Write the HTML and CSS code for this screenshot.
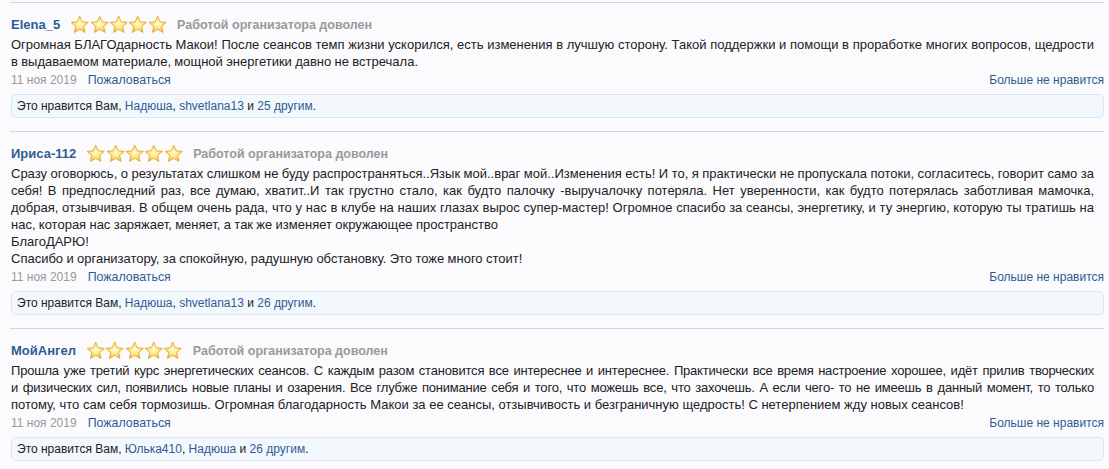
FILE: index.html
```html
<!DOCTYPE html>
<html lang="ru">
<head>
    <meta charset="UTF-8">
    <title>Отзывы</title>
    <link rel="stylesheet" href="styles.css">
</head>
<body>
<svg width="0" height="0" class="defs">
    <defs>
        <radialGradient id="gold" cx="50%" cy="45%" r="60%">
            <stop offset="0%" stop-color="#fffbe0"/>
            <stop offset="45%" stop-color="#ffe98a"/>
            <stop offset="100%" stop-color="#f2b531"/>
        </radialGradient>
        <symbol id="star" viewBox="0 0 20 20">
            <path d="M10 1.2l2.6 5.8 6.3.6-4.8 4.2 1.4 6.2L10 14.8 4.5 18l1.4-6.2L1.1 7.6l6.3-.6z" fill="url(#gold)" stroke="#e3a52a" stroke-width=".9" stroke-linejoin="round"/>
        </symbol>
    </defs>
</svg>

<div class="reviews">
    <div class="review">
        <div class="head">
            <a class="name" href="#">Elena_5</a>
            <span class="stars">
                <svg><use href="#star"/></svg><svg><use href="#star"/></svg><svg><use href="#star"/></svg><svg><use href="#star"/></svg><svg><use href="#star"/></svg>
            </span>
            <span class="verdict">Работой организатора доволен</span>
        </div>
        <div class="text">Огромная БЛАГОдарность Макои! После сеансов темп жизни ускорился, есть изменения в лучшую сторону. Такой поддержки и помощи в проработке многих вопросов, щедрости в выдаваемом материале, мощной энергетики давно не встречала.</div>
        <div class="meta">
            <span class="date">11 ноя 2019</span>
            <a href="#" class="report">Пожаловаться</a>
            <a href="#" class="unlike">Больше не нравится</a>
        </div>
        <div class="likes">Это нравится Вам, <a href="#">Надюша</a>, <a href="#">shvetlana13</a> и <a href="#">25 другим</a>.</div>
    </div>

    <div class="review">
        <div class="head">
            <a class="name" href="#">Ириса-112</a>
            <span class="stars">
                <svg><use href="#star"/></svg><svg><use href="#star"/></svg><svg><use href="#star"/></svg><svg><use href="#star"/></svg><svg><use href="#star"/></svg>
            </span>
            <span class="verdict">Работой организатора доволен</span>
        </div>
        <div class="text">Сразу оговорюсь, о результатах слишком не буду распространяться..Язык мой..враг мой..Изменения есть! И то, я практически не пропускала потоки, согласитесь, говорит само за себя! В предпоследний раз, все думаю, хватит..И так грустно стало, как будто палочку -выручалочку потеряла. Нет уверенности, как будто потерялась заботливая мамочка, добрая, отзывчивая. В общем очень рада, что у нас в клубе на наших глазах вырос супер-мастер! Огромное спасибо за сеансы, энергетику, и ту энергию, которую ты тратишь на нас, которая нас заряжает, меняет, а так же изменяет окружающее пространство<br>БлагоДАРЮ!<br>Спасибо и организатору, за спокойную, радушную обстановку. Это тоже много стоит!</div>
        <div class="meta">
            <span class="date">11 ноя 2019</span>
            <a href="#" class="report">Пожаловаться</a>
            <a href="#" class="unlike">Больше не нравится</a>
        </div>
        <div class="likes">Это нравится Вам, <a href="#">Надюша</a>, <a href="#">shvetlana13</a> и <a href="#">26 другим</a>.</div>
    </div>

    <div class="review">
        <div class="head">
            <a class="name" href="#">МойАнгел</a>
            <span class="stars">
                <svg><use href="#star"/></svg><svg><use href="#star"/></svg><svg><use href="#star"/></svg><svg><use href="#star"/></svg><svg><use href="#star"/></svg>
            </span>
            <span class="verdict">Работой организатора доволен</span>
        </div>
        <div class="text plain">
            <div class="full">Прошла уже третий курс энергетических сеансов. С каждым разом становится все интереснее и интереснее. Практически все время настроение хорошее, идёт прилив творческих<br>и физических сил, появились новые планы и озарения. Все глубже понимание себя и того, что можешь все, что захочешь. А если чего- то не имеешь в данный момент, то только</div>
            потому, что сам себя тормозишь. Огромная благодарность Макои за ее сеансы, отзывчивость и безграничную щедрость! С нетерпением жду новых сеансов!
        </div>
        <div class="meta">
            <span class="date">11 ноя 2019</span>
            <a href="#" class="report">Пожаловаться</a>
            <a href="#" class="unlike">Больше не нравится</a>
        </div>
        <div class="likes">Это нравится Вам, <a href="#">Юлька410</a>, <a href="#">Надюша</a> и <a href="#">26 другим</a>.</div>
    </div>
</div>
</body>
</html>
```

FILE: styles.css
```css
*{margin:0;padding:0;box-sizing:border-box;}
body{
    background:#fbfbfe;
    font-family:"Liberation Sans",Arial,sans-serif;
    font-size:13px;
    color:#222;
    overflow:hidden;
}
a{color:#2f5b93;text-decoration:none;}
.defs{position:absolute;}

.reviews{padding:2px 5px 0 10px;}
.review{
    border-top:1px solid #cfd8e3;
    padding:10px 0 13px 1px;
}
.head{
    display:flex;
    align-items:center;
    height:23px;
}
.name{font-weight:bold;font-size:13px;color:#2d5c95;}
.stars{display:flex;margin:0 10px 0 10px;}
.stars svg{width:19.4px;height:19.4px;}
.verdict{color:#999;font-weight:bold;font-size:12.5px;}

.text{line-height:17px;text-align:justify;padding-right:10px;word-spacing:-0.3px;}
.text.plain{word-spacing:0;}
.text .full{text-align-last:justify;letter-spacing:-0.2px;}

.meta{display:flex;line-height:20px;font-size:12px;}
.date{color:#999;}
.report{margin-left:11px;font-size:12.4px;}
.unlike{margin-left:auto;}

.likes{
    margin-top:4px;
    border:1px solid #d6e6f6;
    background:#f3f8fd;
    border-radius:5px;
    padding:3px 8px 3px 5px;
    line-height:16px;
    font-size:12px;
}
```
